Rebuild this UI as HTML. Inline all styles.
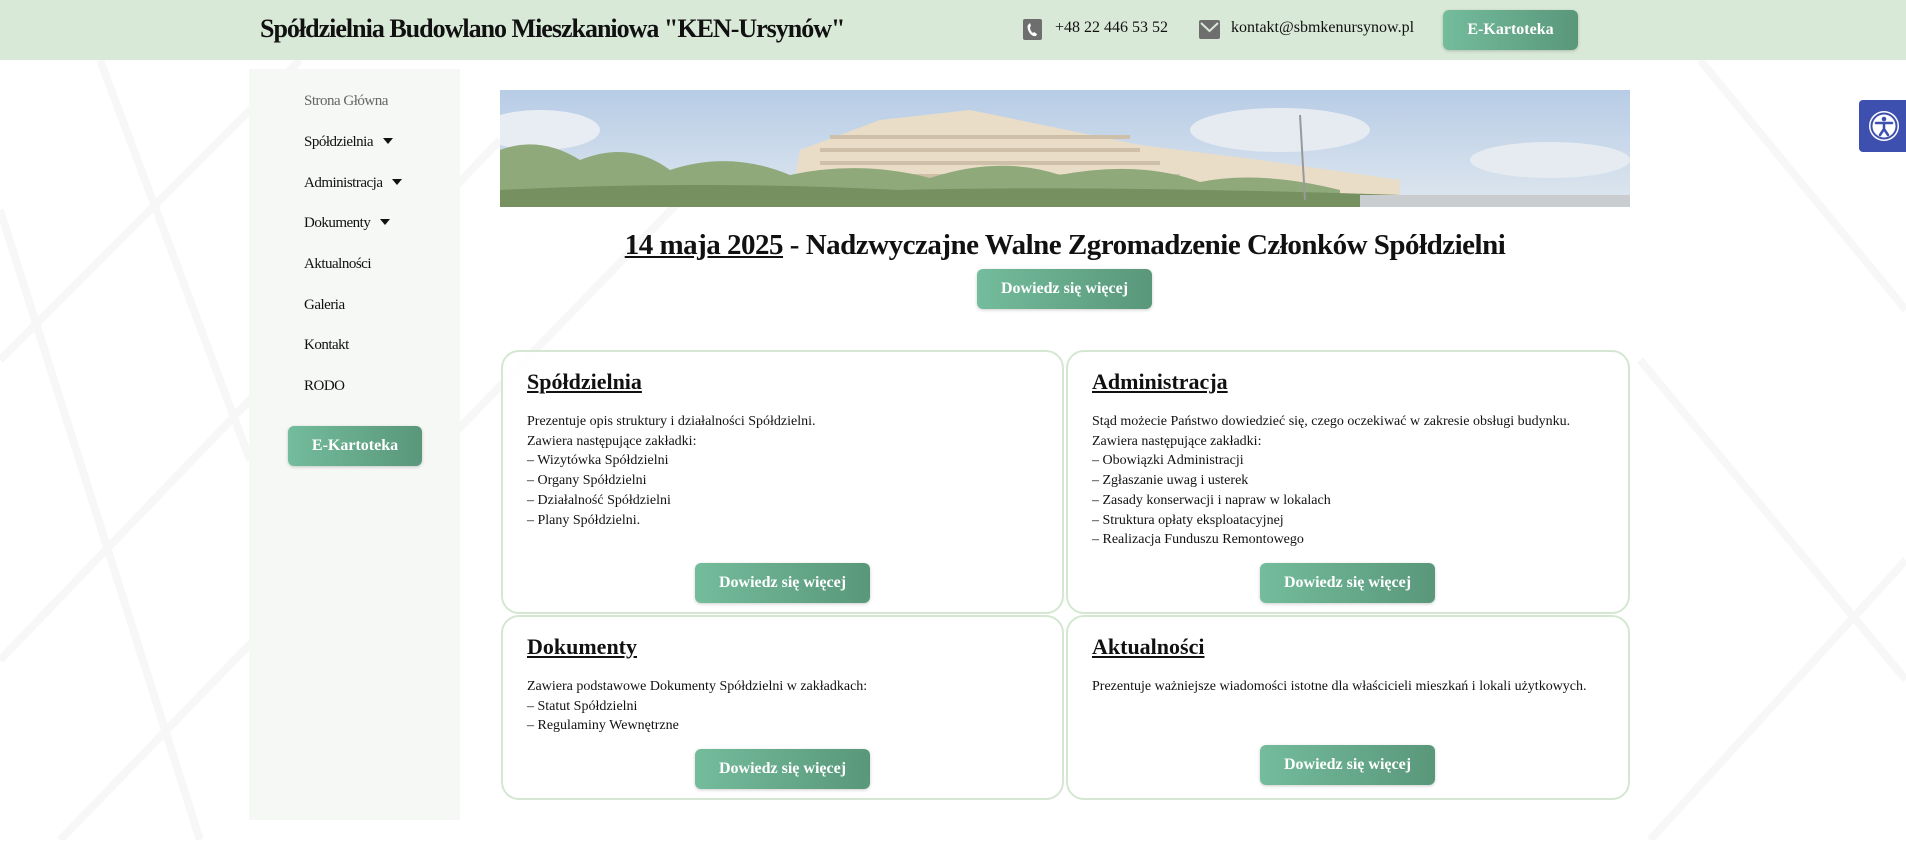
<!DOCTYPE html>
<html><head><meta charset="utf-8"><style>
*{margin:0;padding:0;box-sizing:border-box}
body{width:1906px;height:866px;overflow:hidden;background:#fff;font-family:"Liberation Serif",serif;color:#111;position:relative}
.hdr{position:absolute;left:0;top:0;width:1906px;height:60px;background:#d9e9d7}
.title{position:absolute;left:260px;top:14px;font-size:26px;font-weight:bold;color:#111;white-space:nowrap;letter-spacing:-1px}
.ct{position:absolute;top:19px;font-size:16px;white-space:nowrap}
.btn{position:absolute;background:linear-gradient(90deg,#73bc9c,#5a977a);color:#fff;font-weight:bold;border-radius:6px;display:flex;align-items:center;justify-content:center;font-size:16px;box-shadow:0 1px 3px rgba(0,0,0,.2)}
.side{position:absolute;left:249px;top:69px;width:211px;height:751px;background:#f5f8f4}
.mi{position:absolute;left:304px;font-size:15px;letter-spacing:-0.5px;white-space:nowrap}
.mi .ar{display:inline-block;width:0;height:0;border-left:5px solid transparent;border-right:5px solid transparent;border-top:6px solid #111;margin-left:10px;vertical-align:2px}
.banner{position:absolute;left:500px;top:90px;width:1130px;height:117px;overflow:hidden}
.head{position:absolute;left:500px;width:1130px;top:229px;text-align:center;font-size:29px;font-weight:bold;letter-spacing:-0.5px}
.card{position:absolute;border:2px solid #d4e8d1;border-radius:18px;background:rgba(255,255,255,.85)}
.card h2{position:absolute;left:24px;top:17px;font-size:22px;text-decoration:underline;font-weight:bold}
.card p{position:absolute;left:24px;top:60px;font-size:14px;line-height:19.7px;white-space:nowrap}
.acc{position:absolute;left:1859px;top:100px;width:47px;height:52px;background:#3d50b0;border-radius:4px 0 0 4px}
</style></head><body>
<svg style="position:absolute;left:0;top:60px" width="1906" height="780">
<g stroke="#f7f7f7" stroke-width="8" fill="none">
<path d="M0 300 L300 0 M0 600 L500 80 M60 780 L700 120 M1650 780 L1906 500 M1700 0 L1906 250 M1640 300 L1906 620 M100 0 L250 400 M0 150 L200 780"/>
</g></svg>
<div class="hdr"></div>
<div class="title">Spółdzielnia Budowlano Mieszkaniowa "KEN-Ursynów"</div>
<svg style="position:absolute;left:1023px;top:19px" width="19" height="21"><rect width="19" height="21" rx="2" fill="#6e6e6e"/><path d="M6 5 q-3 2 0 8 q3 5 7 4 l1-2 -3-2 -1 1 q-3-2-3-6 l1-1 -1-3z" fill="#fff"/></svg>
<div class="ct" style="left:1055px">+48 22 446 53 52</div>
<svg style="position:absolute;left:1199px;top:20px" width="21" height="19"><rect width="21" height="19" rx="2" fill="#6e6e6e"/><path d="M2 3 L10.5 11 L19 3" stroke="#d9e9d7" stroke-width="2" fill="none"/></svg>
<div class="ct" style="left:1231px">kontakt@sbmkenursynow.pl</div>
<div class="btn" style="left:1443px;top:10px;width:135px;height:40px">E-Kartoteka</div>
<div class="side"></div>
<div class="mi" style="top:93px;color:#666">Strona Główna</div>
<div class="mi" style="top:134px">Spółdzielnia<span class="ar"></span></div>
<div class="mi" style="top:175px">Administracja<span class="ar"></span></div>
<div class="mi" style="top:215px">Dokumenty<span class="ar"></span></div>
<div class="mi" style="top:256px">Aktualności</div>
<div class="mi" style="top:297px">Galeria</div>
<div class="mi" style="top:337px">Kontakt</div>
<div class="mi" style="top:378px">RODO</div>
<div class="btn" style="left:288px;top:426px;width:134px;height:40px">E-Kartoteka</div>
<div class="banner"><svg width="1130" height="117">
<defs><linearGradient id="sk" x1="0" y1="0" x2="0" y2="1"><stop offset="0" stop-color="#b7cce6"/><stop offset="1" stop-color="#dfe7ef"/></linearGradient></defs>
<rect width="1130" height="117" fill="url(#sk)"/>
<ellipse cx="40" cy="40" rx="60" ry="20" fill="#e8edf3"/><ellipse cx="780" cy="40" rx="90" ry="22" fill="#e6ebf1"/><ellipse cx="1050" cy="70" rx="80" ry="18" fill="#e6ebf1"/>
<path d="M300 60 L380 30 L470 20 L640 55 L760 70 L900 90 L900 117 L290 117Z" fill="#e9ddc8"/>
<g fill="#cdbfa8"><rect x="330" y="45" width="300" height="4"/><rect x="320" y="58" width="320" height="4"/><rect x="320" y="71" width="340" height="4"/><rect x="320" y="84" width="360" height="4"/></g>
<path d="M0 60 Q40 45 80 70 Q130 50 170 80 Q230 60 290 85 Q360 70 430 88 Q500 65 560 85 Q640 70 700 92 Q760 80 840 100 L840 117 L0 117Z" fill="#8fa97a"/>
<path d="M0 100 Q200 90 400 100 Q600 95 900 105 L900 117 L0 117Z" fill="#76905f"/>
<rect x="860" y="105" width="270" height="12" fill="#c9cdd0"/>
<line x1="800" y1="25" x2="805" y2="110" stroke="#999" stroke-width="2"/>
</svg></div>
<div class="head"><span style="text-decoration:underline">14 maja 2025</span> - Nadzwyczajne Walne Zgromadzenie Członków Spółdzielni</div>
<div class="btn" style="left:977px;top:269px;width:175px;height:40px">Dowiedz się więcej</div>

<div class="card" style="left:501px;top:350px;width:563px;height:264px"><h2>Spółdzielnia</h2><p>Prezentuje opis struktury i działalności Spółdzielni.<br>Zawiera następujące zakładki:<br>– Wizytówka Spółdzielni<br>– Organy Spółdzielni<br>– Działalność Spółdzielni<br>– Plany Spółdzielni.</p></div>
<div class="card" style="left:1066px;top:350px;width:564px;height:264px"><h2>Administracja</h2><p>Stąd możecie Państwo dowiedzieć się, czego oczekiwać w zakresie obsługi budynku.<br>Zawiera następujące zakładki:<br>– Obowiązki Administracji<br>– Zgłaszanie uwag i usterek<br>– Zasady konserwacji i napraw w lokalach<br>– Struktura opłaty eksploatacyjnej<br>– Realizacja Funduszu Remontowego</p></div>
<div class="card" style="left:501px;top:615px;width:563px;height:185px"><h2>Dokumenty</h2><p>Zawiera podstawowe Dokumenty Spółdzielni w zakładkach:<br>– Statut Spółdzielni<br>– Regulaminy Wewnętrzne</p></div>
<div class="card" style="left:1066px;top:615px;width:564px;height:185px"><h2>Aktualności</h2><p>Prezentuje ważniejsze wiadomości istotne dla właścicieli mieszkań i lokali użytkowych.</p></div>
<div class="btn" style="left:695px;top:563px;width:175px;height:40px">Dowiedz się więcej</div>
<div class="btn" style="left:1260px;top:563px;width:175px;height:40px">Dowiedz się więcej</div>
<div class="btn" style="left:695px;top:749px;width:175px;height:40px">Dowiedz się więcej</div>
<div class="btn" style="left:1260px;top:745px;width:175px;height:40px">Dowiedz się więcej</div>

<div class="acc"><svg width="47" height="52"><circle cx="25" cy="26" r="15" fill="#fff"/><circle cx="25" cy="26" r="12.5" fill="none" stroke="#3d50b0" stroke-width="2"/><circle cx="25" cy="19" r="2.3" fill="#3d50b0"/><path d="M17 23 L33 23 M25 23 L25 29 M25 29 L21 35 M25 29 L29 35" stroke="#3d50b0" stroke-width="2.5" fill="none" stroke-linecap="round"/></svg></div>
</body></html>
